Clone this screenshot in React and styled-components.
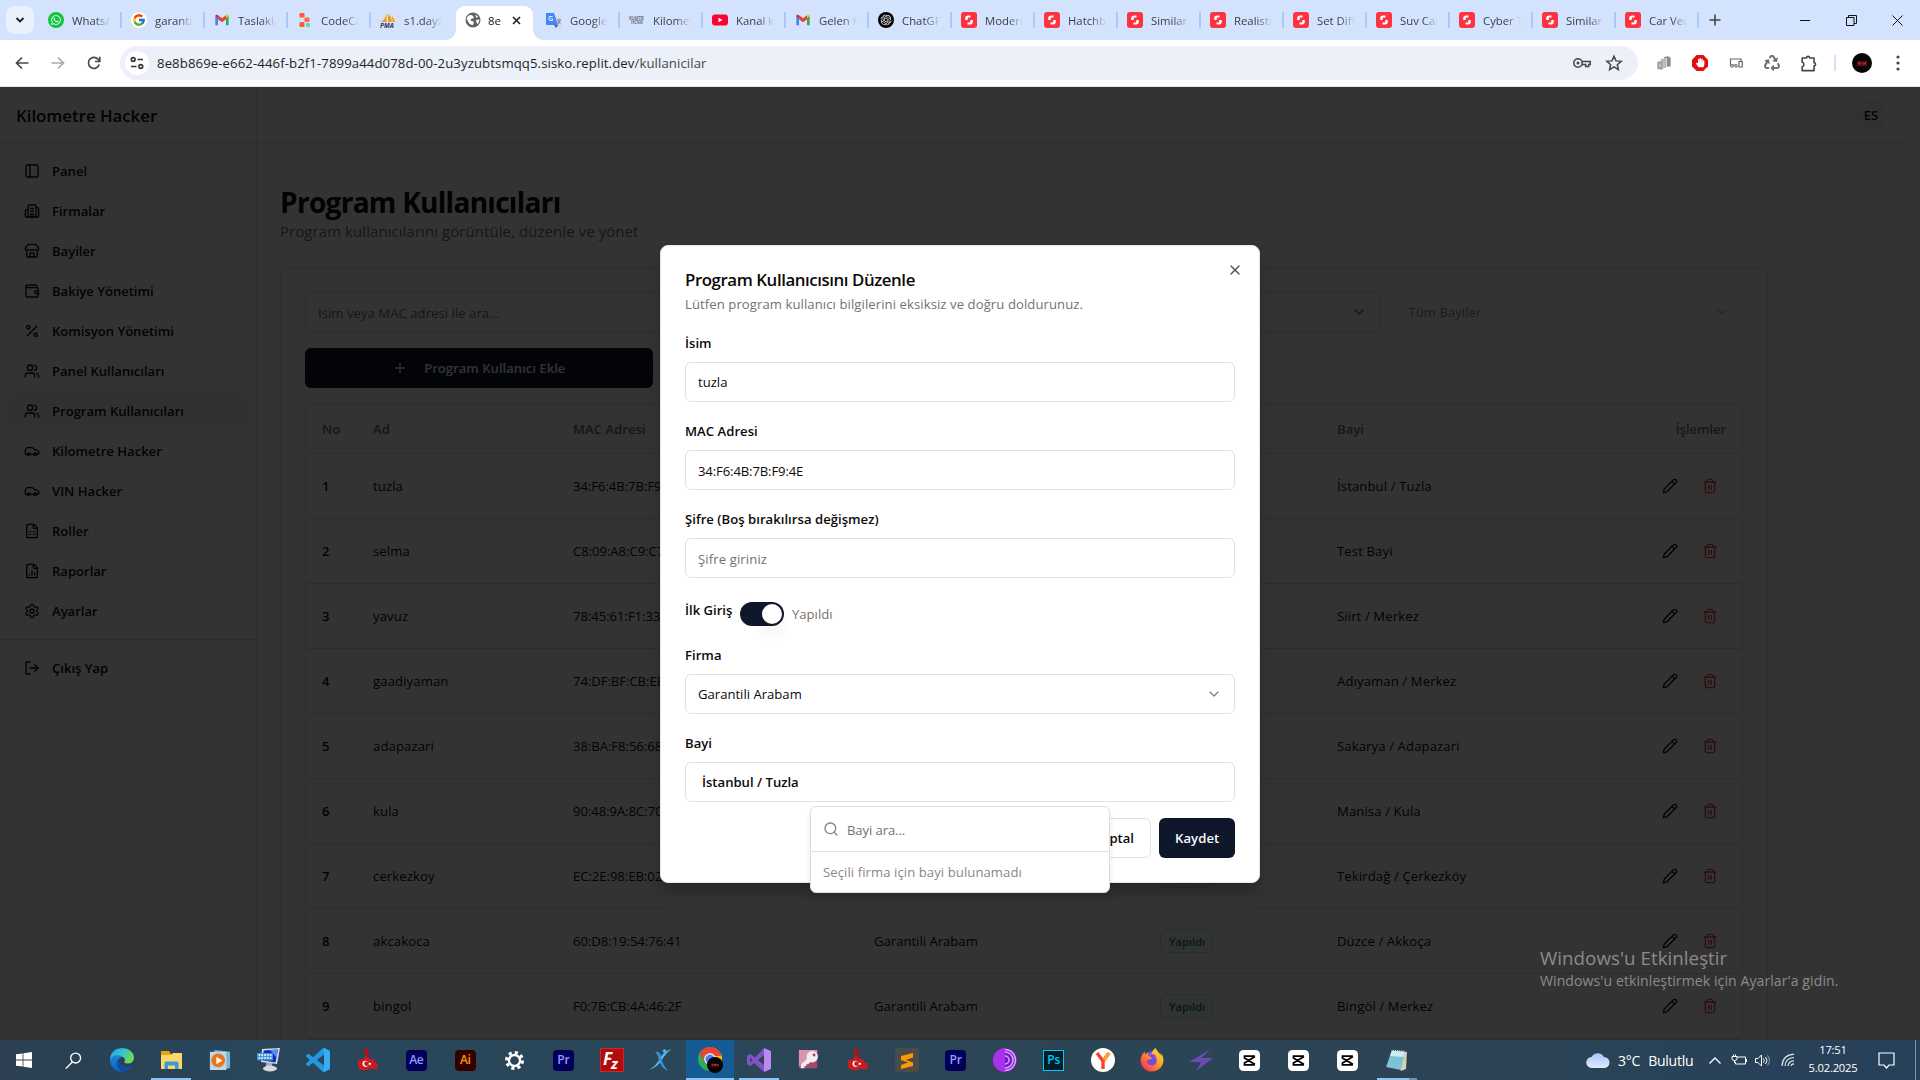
import React from "react";
import styled, { createGlobalStyle, css } from "styled-components";
import {
  PanelLeft, Building2, Store, Wallet, Percent, Users, Car, FileSpreadsheet,
  FileChartColumn, Settings, LogOut, Pencil, Trash2, Plus, ChevronDown, X, Search,
} from "lucide-react";
import { FcGoogle } from "react-icons/fc";
import { FaWhatsapp, FaFirefoxBrowser, FaRecycle, FaHandPaper } from "react-icons/fa";
import { SiOpenai } from "react-icons/si";

const fs = (n) => `font-size: ${(n * 0.936).toFixed(2)}px;`;

const Global = createGlobalStyle`
  *, *::before, *::after { box-sizing: border-box; }
  html, body { margin: 0; padding: 0; height: 100%; overflow: hidden; }
  body { font-family: "Open Sans", "Noto Sans", sans-serif; color: #0c0a09; }
  svg { display: block; flex: none; }
`;

const Screen = styled.div`
  display: grid;
  grid-template-rows: 40px 47px 953px 40px;
  width: 1920px;
  height: 1080px;
  overflow: hidden;
  background: #fff;
`;

/* ---------- browser chrome ---------- */
const TabStrip = styled.div`
  display: flex;
  align-items: stretch;
  background: #d3e3fd;
  padding-left: 6px;
`;
const TabSearch = styled.div`
  width: 28px; height: 28px; margin: 6px 4px 0 0;
  border-radius: 9px; background: #e9f1fe;
  display: flex; align-items: center; justify-content: center;
`;
const Tab = styled.div`
  width: 83px; display: flex; align-items: center; padding-left: 10px; gap: 8px; position: relative;
  ${(p) => p.$line && css`&::after { content: ""; position: absolute; right: -1px; top: 12px; width: 2px; height: 16px; background: #a8c7fa; border-radius: 1px; }`}
  ${(p) => p.$active && css`
    z-index: 1; gap: 7px; padding: 0 0 0 12px;
    &::before { content: ""; position: absolute; z-index: -1; left: 3px; right: 3px; top: 6px; bottom: 0; background: #fff; border-radius: 9px 9px 0 0; }
  `}
`;
const TabFoot = styled.i`
  position: absolute; bottom: 0; width: 10px; height: 10px;
  ${(p) => p.$right
    ? "right: -7px; background: radial-gradient(circle at 100% 0, transparent 9.5px, #fff 10px);"
    : "left: -7px; background: radial-gradient(circle at 0 0, transparent 9.5px, #fff 10px);"}
`;
const TabTitle = styled.span`
  width: ${(p) => p.$w || 38}px; overflow: hidden; white-space: nowrap; ${fs(12.1)} line-height: 20px; color: #3c4043;
  padding-top: 1px;
  mask-image: linear-gradient(90deg, #000 60%, transparent 100%);
  ${(p) => p.$active && "mask-image: none; color: #202124;"}
`;
const TabClose = styled.span`display: flex; margin-left: 1px;`;
const NewTab = styled.div`width: 34px; display: flex; align-items: center; justify-content: center;`;
const WindowButtons = styled.div`margin-left: auto; display: flex;`;
const WindowButton = styled.div`width: 46px; display: flex; align-items: center; justify-content: center;`;

const Toolbar = styled.div`
  display: flex; align-items: center; background: #fff; border-bottom: 1px solid #dfe3e1; padding: 0 4px 0 4px;
`;
const ToolButton = styled.div`
  width: ${(p) => p.$w || 36}px; height: 34px; display: flex; align-items: center; justify-content: center;
`;
const Omnibox = styled.div`
  width: 1518px; height: 34px; border-radius: 17px; background: #ecf0f9; margin-left: 8px; margin-right: 8px;
  display: flex; align-items: center; padding: 0 8px 0 5px;
`;
const SiteInfo = styled.div`
  width: 24px; height: 24px; border-radius: 50%; background: #fff; display: flex; align-items: center; justify-content: center; margin-right: 8px;
`;
const Url = styled.div`${fs(14.1)} letter-spacing: 0.085px; color: #1f1f1f; flex: 1; white-space: nowrap; line-height: 20px; span { color: #474747; }`;
const Rule = styled.i`width: 2px; height: 16px; background: #d3e3fd; margin: 0 7px 0 8px;`;
const ProfileDot = styled.div`
  width: 20px; height: 20px; border-radius: 50%; background: #050505; display: flex; align-items: center; justify-content: center; margin: 0 8px 0 9px;
`;

/* ---------- application ---------- */
const Page = styled.div`
  position: relative; display: grid; grid-template-columns: 257px 1647px; overflow: hidden; background: #fff;
`;
const Sidebar = styled.aside`border-right: 1px solid #e7e5e4;`;
const Brand = styled.div`
  height: 56px; border-bottom: 1px solid #e0dedd; padding: 1px 16px 0; display: flex; align-items: center; ${fs(18)} font-weight: 600; letter-spacing: -0.03px;
`;
const Nav = styled.nav`padding: 8px; ${(p) => p.$last && "border-top: 1px solid #e0dedd;"}`;
const NavItem = styled.div`
  height: 40px; padding: 0 16px; display: flex; align-items: center; gap: 12px; border-radius: 6px; ${fs(14)} font-weight: 600; letter-spacing: -0.02px;
  background: ${(p) => (p.$active ? "#f6f5f4" : "transparent")};
`;
const Main = styled.main`min-width: 0;`;
const TopBar = styled.div`
  height: 56px; border-bottom: 1px solid #e0dedd; display: flex; align-items: center; justify-content: flex-end; padding-right: 17px;
`;
const Avatar = styled.div`
  width: 32px; height: 32px; border-radius: 50%; background: #f5f5f4; display: flex; align-items: center; justify-content: center; ${fs(14)} font-weight: 600;
`;
const Container = styled.div`width: 1536px; padding: 39px 25px 0 23px;`;
const Title = styled.h1`margin: 0; ${fs(30)} line-height: 36px; font-weight: 700; letter-spacing: -0.75px; padding-top: 2px; height: 37px;`;
const Subtitle = styled.p`margin: 0; ${fs(16)} letter-spacing: 0.08px; line-height: 24px; color: #78716c;`;
const Card = styled.section`
  margin-top: 24px; width: 1488px; height: 900px; border: 1px solid #e0dedd; border-radius: 8px; padding: 24px; box-shadow: 0 1px 2px rgba(0,0,0,.05);
`;
const Filters = styled.div`display: grid; grid-template-columns: repeat(4, 347.5px); gap: 16px;`;
const FilterBox = styled.div`
  grid-column: span ${(p) => p.$span || 1}; height: 40px; border: 1px solid #e0dedd; border-radius: 6px; padding: ${(p) => (p.$muted ? 2 : 0)}px 12px 0;
  display: flex; align-items: center; justify-content: space-between; ${fs(14)} letter-spacing: 0.05px;
  color: ${(p) => (p.$muted ? "#78716c" : "#0c0a09")}; opacity: ${(p) => (p.$disabled ? 0.5 : 1)};
  svg { opacity: .6; }
`;
const AddButton = styled.button`
  height: 40px; border: 0; border-radius: 6px; background: #0f172a; color: #f8fafc; font-family: inherit; ${fs(14)} font-weight: 600;
  display: flex; align-items: center; justify-content: center; gap: 16px; padding: 0;
`;
const Table = styled.div`margin-top: 16px; border: 1px solid #e0dedd; border-radius: 6px;`;
const Row = styled.div`
  display: grid; grid-template-columns: 51px 200px 301px 287px 176px 1fr 96px; height: ${(p) => (p.$head ? 49 : 65)}px; align-items: center;
  padding: 0 16px; border-bottom: 1px solid #e0dedd; ${fs(14)} white-space: nowrap;
  ${(p) => p.$head && "font-weight: 600; color: #78716c;"}
`;
const Cell = styled.div`
  ${(p) => p.$strong && "font-weight: 600;"}
  ${(p) => p.$right && "text-align: right; letter-spacing: -0.08px;"}
  ${(p) => p.$mac && "letter-spacing: -0.04px;"}
  ${(p) => p.$name && "letter-spacing: 0.12px;"}
`;
const Actions = styled.div`display: flex; justify-content: flex-end; gap: 24px; padding-right: 8px;`;
const Badge = styled.span`
  display: inline-flex; align-items: center; height: 24px; padding: 0 7px 0 8px; border: 1px solid #b9ebcb; border-radius: 6px; background: #f0fdf4; color: #15803d;
  ${fs(12)} font-weight: 600; letter-spacing: -0.05px; margin-left: -1px; vertical-align: middle;
`;

/* ---------- dialog ---------- */
const Overlay = styled.div`
  position: absolute; inset: 0; background: rgba(0,0,0,.8); display: flex; align-items: center; justify-content: center; padding-top: 1px;
`;
const Dialog = styled.div`
  position: relative; width: 600px; height: 638px; background: #fff; border: 1px solid #e7e5e4; border-radius: 8px; padding: 24px;
  box-shadow: 0 10px 15px -3px rgba(0,0,0,.3);
`;
const DialogClose = styled.span`position: absolute; right: 16px; top: 16px; color: #555352;`;
const DialogTitle = styled.h2`margin: 0; ${fs(18)} line-height: 20px; font-weight: 600; letter-spacing: -0.43px;`;
const DialogText = styled.p`margin: 4px 0 16px; ${fs(14)} letter-spacing: 0.085px; line-height: 20px; color: #78716c;`;
const Field = styled.div`margin-bottom: 16px; position: relative;`;
const Label = styled.label`display: block; height: 24px; line-height: 26px; margin-bottom: 8px; ${fs(14)} font-weight: 600; letter-spacing: 0.03px;`;
const Input = styled.div`
  height: 40px; border: 1px solid #e2e1e0; border-radius: 6px; padding: 0 12px; display: flex; align-items: center; justify-content: space-between; ${fs(14)}
  ${(p) => p.$mac && "letter-spacing: -0.12px; padding-top: 1px;"}
  ${(p) => p.$muted && "color: #78716c; padding-top: 1px; letter-spacing: 0.12px;"}
  ${(p) => p.$strong && "font-weight: 600; padding: 0 16px;"}
`;
const SwitchRow = styled.div`display: flex; height: 32px; align-items: flex-end; margin-bottom: 16px; ${fs(14)} `;
const SwitchLabel = styled.span`font-weight: 600; align-self: flex-start; line-height: 32px; width: 54px; white-space: nowrap;`;
const Switch = styled.div`
  width: 44px; height: 24px; border-radius: 12px; background: #0f172a; padding: 2px; display: flex; justify-content: flex-end; margin: 0 8px 0 1px;
  &::after { content: ""; width: 20px; height: 20px; border-radius: 50%; background: #fff; box-shadow: 0 10px 15px -3px rgba(0,0,0,.12); }
`;
const SwitchState = styled.span`line-height: 24px; color: #78716c;`;
const Footer = styled.div`display: flex; justify-content: flex-end; gap: 8px;`;
const Button = styled.button`
  height: 40px; padding: 0 16px; border-radius: 6px; font-family: inherit; ${fs(14)} font-weight: 600;
  ${(p) => p.$primary ? "background: #0f172a; color: #f8fafc; border: 0; width: 76px; letter-spacing: 0.08px;" : "background: #fff; color: #0c0a09; border: 1px solid #e2e1e0;"}
`;
const Popover = styled.div`
  position: absolute; z-index: 2; top: 76px; left: 125px; width: 300px; height: 87px; background: #fff; border: 1px solid #dededd; border-radius: 6px;
  box-shadow: 0 4px 6px -1px rgba(0,0,0,.12); ${fs(14)} color: #78716c;
`;
const PopSearch = styled.div`
  height: 45px; border-bottom: 1px solid #e2e1e0; padding: 2px 12px 0; display: flex; align-items: center; gap: 8px; letter-spacing: -0.1px;
  svg { margin-top: -2px; }
`;
const PopEmpty = styled.div`height: 40px; line-height: 41px; padding: 0 12px; color: #8b8785; letter-spacing: 0.08px;`;
const Watermark = styled.div`
  position: absolute; right: 81px; bottom: 49px; width: 299px; color: #8b8b8b; white-space: nowrap;
  p { margin: 0; ${fs(20)} line-height: 26px; letter-spacing: 0.05px; }
  span { display: block; ${fs(15)} line-height: 20px; letter-spacing: 0.09px; }
`;

/* ---------- taskbar ---------- */
const Taskbar = styled.div`
  display: flex; background: linear-gradient(90deg, #2b3f50 0%, #28455a 12%, #2a4658 35%, #2c4555 55%, #2b4355 80%, #27405a 100%); color: #fff;
`;
const TaskSlot = styled.div`
  width: 48px; margin-right: 1.04px; height: 40px; display: flex; align-items: center; justify-content: center; position: relative;
  background: ${(p) => (p.$active ? "#165c94" : "transparent")};
  ${(p) => p.$open && css`&::after { content: ""; position: absolute; bottom: 0; height: 2px; left: ${p.$active ? 0 : 4}px; right: ${p.$active ? 0 : 4}px; background: ${p.$stack ? "linear-gradient(90deg,#8fc4f0 80%,#6d93b0 80%)" : "#8fc4f0"}; }`}
`;
const AdobeTile = styled.span`
  width: 21px; height: 21px; border-radius: ${(p) => (p.$square ? 0 : 4)}px; background: ${(p) => p.$bg}; color: ${(p) => p.$fg};
  border: ${(p) => (p.$square ? `1px solid ${p.$fg}` : "0")}; display: flex; align-items: center; justify-content: center; font-size: 12px; font-weight: 600; line-height: 1;
  padding-bottom: 1px; letter-spacing: -0.3px;
`;
const Tray = styled.div`margin-left: auto; display: flex; align-items: center; ${fs(15)} letter-spacing: -0.25px;`;
const Weather = styled.div`display: flex; align-items: center; gap: 8px; width: 117px; white-space: nowrap;`;
const TrayIcon = styled.div`width: ${(p) => p.$w}px; display: flex; justify-content: center;`;
const Clock = styled.div`width: 64px; text-align: center; ${fs(12)} line-height: 18px; padding-bottom: 2px; letter-spacing: -0.2px;`;
const ShowDesktop = styled.i`width: 5px; height: 40px; border-left: 1px solid #8796a2;`;

/* ---------- icons ---------- */
const S = ({ s = 16, w, h, vb = "0 0 24 24", children, ...r }) => (
  <svg width={w || s} height={h || s} viewBox={vb} fill="none" {...r}>{children}</svg>
);
const WhatsApp = () => (
  <S vb="0 0 16 16"><circle cx="8" cy="8" r="8" fill="#12c53c" /><FaWhatsapp x="2.5" y="2.5" size={11} color="#fff" /></S>
);
const Google = () => (
  <S vb="0 0 16 16"><circle cx="8" cy="8" r="8" fill="#fff" /><FcGoogle x="1" y="1" size={14} /></S>
);
const Gmail = () => (
  <S><path d="M2 20V6l4 3v11z" fill="#4285f4" /><path d="M18 20V9l4-3v14z" fill="#34a853" /><path d="M18 9V5.500l1.500-1.200Q22 3.300 22 6.500z" fill="#fbbc04" /><path d="M6 9V5L12 9.500 18 5v6l-6 4.500L6 11z" fill="#ea4335" /><path d="M6 9V5.500L4.500 4.300Q2 3.300 2 6.500z" fill="#c5221f" /></S>
);
const Blocks = () => (
  <S vb="0 0 16 16"><rect x="2.500" y="1" width="5" height="4.500" rx="1" fill="#ff5c35" /><rect x="7.500" y="5.500" width="5" height="4.500" rx="1" fill="#ff6f3c" /><rect x="2.500" y="10" width="5" height="5" rx="1" fill="#ff5c35" /><rect x="9" y="11" width="4" height="4" rx="1" fill="#65dba0" /></S>
);
const Pma = () => (
  <S vb="0 0 16 16"><path d="M6.500 0v10H1Q6 7 6.500 0zM8 2Q12.500 5 11.500 10H8zM12 4q3 3 3 6h-2.500z" fill="#f89c0e" /><text x="0" y="15.800" fontSize="6.500" fontWeight="700" fontStyle="italic" fill="#34345a" fontFamily="Open Sans, sans-serif">PMA</text></S>
);
const Translate = () => (
  <S vb="0 0 16 16"><path d="M7 5h8.500v11H9z" fill="#d7d9dc" /><path d="M0 1h8l4 12H1q-1 0-1-1z" fill="#4285f4" /><path d="M8 13h4l-2 3z" fill="#3367d6" /><text x="2" y="9" fontSize="7" fontWeight="600" fill="#fff" fontFamily="Open Sans, sans-serif">G</text><path d="M11 8h4M13 7v1M11.500 12l3-4M12 9l2.500 3" stroke="#5d7291" strokeWidth="0.8" /></S>
);
const KmIcon = () => (
  <S vb="0 0 16 16"><text x="0" y="7.500" fontSize="4.500" fontWeight="700" fill="#6b7280" fontFamily="Open Sans, sans-serif" textLength="15">KLMTR</text><text x="2" y="12" fontSize="4.500" fontWeight="700" fill="#6b7280" fontFamily="Open Sans, sans-serif" textLength="12">HCKR</text></S>
);
const YouTube = () => (
  <S vb="0 0 16 16"><rect x="0" y="2.500" width="16" height="11" rx="3" fill="#ff0033" /><path d="M6.500 5.700v4.600l4-2.300z" fill="#fff" /></S>
);
const ChatGpt = () => (
  <S vb="0 0 16 16"><circle cx="8" cy="8" r="8" fill="#000" /><SiOpenai x="2.5" y="2.5" size={11} color="#fff" /></S>
);
const Stock = () => (
  <S vb="0 0 16 16"><rect width="16" height="16" rx="3" fill="#ff333f" /><path d="M9.500 3.500H7.400Q4.200 3.500 4.200 6.300v1.700h2.500V6.400q0-.9.900-.9h1.900zM6.500 12.500h2.100q3.200 0 3.200-2.800V8H9.300v1.600q0 .9-.9.900H6.500z" fill="#fff" /></S>
);
const Globe = () => (
  <S vb="0 0 16 16"><circle cx="8" cy="8" r="7.500" fill="#5f6368" /><path d="M3 4q3-2 5 0l1 2-3 1q-1 2 1 2l2 1-1 3Q4 13 3 9L1.500 7zM10 2.500l3 2-1.500 1.500zM11 8l3.500-.5-1 3.500-1.500 1z" fill="#fff" /></S>
);
const Thumb = () => (
  <S w={23} h={24}><path d="M2 12q5 0 8-4L8 3q0-3 2.500-3 2 0 2.500 3l1 5-1 3h5q1.500 1 .5 2.500L23 16l-1 6-7-1Q9 24 4 22q-3-4-2-10z" fill="#c91c22" /><path d="M8 3q0-3 2.500-3 2 0 2.500 3l1 5-2 2z" fill="#a5151a" /><circle cx="10" cy="16" r="3.200" fill="#fff" /><circle cx="11" cy="15.800" r="2.500" fill="#c91c22" /><circle cx="14.500" cy="16" r="1.200" fill="#fff" /></S>
);
const CapCut = () => (
  <S w={21} h={21} vb="0 0 21 21"><rect width="21" height="21" rx="4.500" fill="#fff" /><path d="M15 8V6.200H5.500V8L16 14.500M15 13v1.800H5.500V13L16 6.500" stroke="#000" strokeWidth="1.800" /></S>
);

const WinLogo = () => <S w={16} h={16} vb="0 0 16 16"><path d="M0 2.300l6.600-.9v6.200H0zM7.400 1.300L16 0v7.600H7.400zM0 8.400h6.600v6.200L0 13.700zM7.400 8.400H16V16l-8.600-1.300z" fill="#fff" /></S>;
const TaskSearch = () => <S s={17}><circle cx="15" cy="8.500" r="7" stroke="#fff" strokeWidth="1.900" /><path d="M10.300 14L1 23.500" stroke="#fff" strokeWidth="1.900" /></S>;
const Edge = () => (
  <S s={24}>
    <defs><linearGradient id="eg" x1="0" y1="0" x2="1" y2=".5"><stop stopColor="#1f9ee8" /><stop offset=".5" stopColor="#35c1d8" /><stop offset="1" stopColor="#6bdc54" /></linearGradient><linearGradient id="eb" x1="0" y1="0" x2="0" y2="1"><stop stopColor="#1789dc" /><stop offset="1" stopColor="#1260b8" /></linearGradient></defs>
    <path d="M0 11.500A12 12 0 0 0 12 24q-6-5-4-11 1-4 5-4Q6 4.500 0 11.500z" fill="url(#eb)" />
    <path d="M9 10q-5 6 1 12 5 4 11-2.500 1-1.500 0-2-4 2-8 .5-5-2-4-8z" fill="#0f4fa3" />
    <path d="M0 11.500Q.5 1 12 0q11 .5 12 9.500 0 6-6.500 6-4.500-.3-3-2Q16 11 13 9 6 4.500 0 11.500z" fill="url(#eg)" />
  </S>
);
const Explorer = () => <S w={23} h={20} vb="0 0 23 20"><path d="M1 1h8l2 3h11v15H1z" fill="#e5a50f" /><path d="M1 5h10l2-2h9v16H1z" fill="#fcd667" /><path d="M4.500 19v-6q0-1.500 1.500-1.500h11q1.500 0 1.500 1.500v6H15v-3.500H8V19z" fill="#3d98db" /></S>;
const Media = () => <S s={22}><path d="M6 1l17 2v18L6 23z" fill="#79b4d8" /><rect x="1" y="3" width="18" height="20" rx="1" fill="#b8d9ea" /><circle cx="10" cy="12.500" r="7.500" fill="#ee7417" /><path d="M8 8.500v8l6.500-4z" fill="#fff" /></S>;
const Remote = () => <S s={24}><path d="M5 1l18-1-3 16-16-2z" fill="#d8dde6" /><path d="M6.500 2.500l14.500-1-2.500 13L6 12.500z" fill="#1229c0" /><path d="M13 2l8-.5-1.500 8z" fill="#6388ed" /><rect x="0" y="5" width="16" height="7.500" rx="1" fill="#3f95d4" /><path d="M1.500 7h13M1.500 10h13" stroke="#fff" strokeWidth="1.400" strokeDasharray="1.800 1" /><path d="M9 15h6v4H9z" fill="#a9adb3" /><ellipse cx="13" cy="20.500" rx="7" ry="3" fill="#d7dadd" /></S>;
const VsCode = () => <S s={24}><path d="M23.150 2.587L18.210.21a1.494 1.494 0 0 0-1.705.29l-9.460 8.630-4.120-3.128a1 1 0 0 0-1.276.057L.327 7.261A1 1 0 0 0 .326 8.740L3.899 12 .326 15.260a1 1 0 0 0 .001 1.479L1.650 17.940a1 1 0 0 0 1.276.057l4.120-3.128 9.460 8.630a1.492 1.492 0 0 0 1.704.29l4.942-2.377A1.500 1.500 0 0 0 24 20.060V3.939a1.500 1.500 0 0 0-.85-1.352zm-5.146 14.861L10.826 12l7.178-5.448v10.896z" fill="#2199df" /><path d="M18 0l5 2.500q1 .5 1 1.500v16q0 1-1 1.500L18 24z" fill="#37aef2" /></S>;
const GearSolid = () => <S s={19}><g stroke="#fff"><circle cx="12" cy="12" r="7" strokeWidth="3" /><circle cx="12" cy="12" r="10" strokeWidth="4" strokeDasharray="4 3.850" /></g></S>;
const FileZilla = () => <S s={24}><rect width="24" height="24" fill="#b30b0b" /><rect x=".5" y=".5" width="23" height="23" stroke="#d84a4a" strokeDasharray="1 1" /><text x="3" y="17" fontSize="17" fontWeight="700" fontStyle="italic" fill="#fff" fontFamily="Open Sans, sans-serif">F</text><text x="11" y="21" fontSize="15" fontWeight="700" fontStyle="italic" fill="#fff" fontFamily="Open Sans, sans-serif">z</text></S>;
const Figure = () => <S s={24}><path d="M22.500 1Q16 6 13 12 9 19 0 22q8-5 11-12 4-7 11.500-9z" fill="#57b4ee" /><path d="M6 4q5-1 6 4 1 8 7 15-7-3-9-11Q9 6 6 4z" fill="#3c8ed6" /><circle cx="15.500" cy="3" r="1.800" fill="#57b4ee" /></S>;
const Chrome = () => (
  <S w={26} h={26} vb="-1 0 26 26"><circle cx="12" cy="12" r="12" fill="#34a853" /><path d="M1.600 6A12 12 0 0 1 22.400 6L23 9H12z" fill="#ea4335" /><path d="M22.400 6A12 12 0 0 1 12 24l5-9-2-6h8z" fill="#fbbc04" /><path d="M1.600 6L12 9l-5 6z" fill="#ea4335" /><circle cx="12" cy="12" r="5.800" fill="#fff" /><circle cx="12" cy="12" r="4.600" fill="#4285f4" /><circle cx="17" cy="18" r="8" fill="#050505" /><path d="M13.500 18h7" stroke="#c02229" strokeWidth="2.500" strokeDasharray="2 .5" /></S>
);
const VisualStudio = () => <S s={24}><path d="M17 0l7 3v18l-7 3z" fill="#b98bf0" /><path d="M17 0v7L3.500 18 0 16.500v-9L3.500 6 17 17v7L5 13z" fill="#8252c4" /><path d="M3 9.500v5L5.500 12z" fill="#2c4555" /><path d="M17 8l-5 4 5 4z" fill="#2c4555" /></S>;
const Access = () => <S s={22}><rect x="1" y="1" width="20" height="20" rx="2" fill="#a8476c" /><path d="M1 1h20v8Q9 9 1 19z" fill="#d995ad" /><circle cx="15.500" cy="8.500" r="6.200" fill="#f1eef0" /><circle cx="17.500" cy="6.500" r="1.600" fill="#a8476c" /><path d="M10.500 10l3.500 3.500-3 3H9v2H7v2.500H3v-4z" fill="#f1eef0" /></S>;
const Sublime = () => <S s={24}><rect width="24" height="24" rx="2" fill="#4b4b4b" /><path d="M18 5v4.500L11 12l7 2.500V18L6 21v-4l7-2.500L6 12V8z" fill="#ff9800" /></S>;
const Tor = () => <S s={24}><circle cx="12" cy="12" r="12" fill="#7d1ac8" /><path d="M12 0a12 12 0 0 0 0 24z" fill="#a832ec" /><path d="M12 4a8 8 0 0 1 0 16M12 8a4 4 0 0 1 0 8M12 1.500a10.500 10.500 0 0 1 0 21" stroke="#d9a7fa" strokeWidth="1.500" /></S>;
const Yandex = () => <S s={24}><circle cx="12" cy="12" r="12" fill="#fff" /><path d="M6 5l6 8M18 5l-6 8v8" stroke="#f7432b" strokeWidth="3.400" /><path d="M18 5l-5 7" stroke="#ffa02b" strokeWidth="3.400" /></S>;
const Firefox = () => <S s={24}><defs><linearGradient id="ff" x1="1" y1="0" x2="0" y2="1"><stop stopColor="#fff044" /><stop offset=".45" stopColor="#ff9a1f" /><stop offset="1" stopColor="#f5156c" /></linearGradient></defs><circle cx="12" cy="13" r="10" fill="#7a48dc" /><FaFirefoxBrowser size={24} fill="url(#ff)" /></S>;
const Bolt = () => <S s={24}><path d="M22 1L0 14h12L7 23 24 10H12z" fill="#6a4bb0" /></S>;
const Notepad = () => <S s={24}><path d="M7 2l15 2-1 17-5 2z" fill="#d8cfb9" /><path d="M7 2l13 1-4 19L1 19z" fill="#7cc3d6" /><path d="M7 2l13 1-1.500 6L5 8z" fill="#c8ecf2" /><path d="M7 2l13 1" stroke="#51606a" strokeWidth="1.500" strokeDasharray="1 1" /></S>;

const adobe = (text, bg, fg, square) => <AdobeTile $bg={bg} $fg={fg} $square={square}>{text}</AdobeTile>;
const tasks = [
  { i: <WinLogo /> }, { i: <TaskSearch /> }, { i: <Edge /> }, { i: <Explorer />, open: true }, { i: <Media /> }, { i: <Remote /> }, { i: <VsCode /> }, { i: <Thumb /> },
  { i: adobe("Ae", "#00005b", "#9999ff") }, { i: adobe("Ai", "#330000", "#ff9a00") }, { i: <GearSolid /> }, { i: adobe("Pr", "#00005b", "#9999ff") }, { i: <FileZilla /> },
  { i: <Figure /> }, { i: <Chrome />, open: true, active: true }, { i: <VisualStudio />, open: true }, { i: <Access /> }, { i: <Thumb /> }, { i: <Sublime /> },
  { i: adobe("Pr", "#00005b", "#9999ff") }, { i: <Tor /> }, { i: adobe("Ps", "#001d26", "#00c8ff", true) }, { i: <Yandex /> }, { i: <Firefox /> }, { i: <Bolt /> },
  { i: <CapCut /> }, { i: <CapCut /> }, { i: <CapCut /> }, { i: <Notepad />, open: true, stack: true },
];

const tabs = [
  [<WhatsApp />, "WhatsApp"], [<Google />, "garantili"], [<Gmail />, "Taslaklar"], [<Blocks />, "CodeCa"], [<Pma />, "s1.dayz"],
  [<Globe />, "8e"], [<Translate />, "Google"], [<KmIcon />, "Kilomet"], [<YouTube />, "Kanal k"], [<Gmail />, "Gelen K"], [<ChatGpt />, "ChatGPT"],
  [<Stock />, "Modern"], [<Stock />, "Hatchba"], [<Stock />, "Similar"], [<Stock />, "Realistic"], [<Stock />, "Set Diffe"], [<Stock />, "Suv Car"],
  [<Stock />, "Cyber T"], [<Stock />, "Similar"], [<Stock />, "Car Vect"],
];

const nav = [
  [PanelLeft, "Panel"], [Building2, "Firmalar"], [Store, "Bayiler"], [Wallet, "Bakiye Yönetimi"], [Percent, "Komisyon Yönetimi"], [Users, "Panel Kullanıcıları"],
  [Users, "Program Kullanıcıları"], [Car, "Kilometre Hacker"], [Car, "VIN Hacker"], [FileSpreadsheet, "Roller"], [FileChartColumn, "Raporlar"], [Settings, "Ayarlar"],
];

const users = [
  ["tuzla", "34:F6:4B:7B:F9:4E", "İstanbul / Tuzla"], ["selma", "C8:09:A8:C9:C7", "Test Bayi"], ["yavuz", "78:45:61:F1:33", "Siirt / Merkez"],
  ["gaadiyaman", "74:DF:BF:CB:EE", "Adıyaman / Merkez"], ["adapazari", "38:BA:F8:56:68", "Sakarya / Adapazari"], ["kula", "90:48:9A:8C:70", "Manisa / Kula"],
  ["cerkezkoy", "EC:2E:98:EB:02", "Tekirdağ / Çerkezköy"], ["akcakoca", "60:D8:19:54:76:41", "Düzce / Akkoça"], ["bingol", "F0:7B:CB:4A:46:2F", "Bingöl / Merkez"],
];

function Browser() {
  return (
    <>
      <TabStrip>
        <TabSearch><S s={10} vb="0 0 10 10"><path d="M1.500 3L5 6.500 8.500 3" stroke="#1f1f1f" strokeWidth="1.800" /></S></TabSearch>
        {tabs.map(([icon, title], i) =>
          i === 5 ? (
            <Tab key={i} $active>
              <TabFoot /><TabFoot $right />
              {icon}
              <TabTitle $w={16} $active>{title}</TabTitle>
              <TabClose><S s={9} vb="0 0 9 9"><path d="M1 1l7 7M8 1L1 8" stroke="#1f1f1f" strokeWidth="1.600" /></S></TabClose>
            </Tab>
          ) : (
            <Tab key={i} $line={i !== 4}>{icon}<TabTitle>{title}</TabTitle></Tab>
          )
        )}
        <NewTab><S s={12} vb="0 0 12 12"><path d="M6 .5v11M.5 6h11" stroke="#444746" strokeWidth="1.600" /></S></NewTab>
        <WindowButtons>
          <WindowButton><S s={10} vb="0 0 10 10"><path d="M0 5.500h10" stroke="#111" strokeWidth="1" /></S></WindowButton>
          <WindowButton><S s={11} vb="0 0 11 11"><path d="M.5 2.500h7.500v8H.5zM2.500 2.500v-2h8v8H8" stroke="#111" strokeWidth="1" /></S></WindowButton>
          <WindowButton><S s={11} vb="0 0 11 11"><path d="M.5.5l10 10M10.500.5l-10 10" stroke="#111" strokeWidth="1" /></S></WindowButton>
        </WindowButtons>
      </TabStrip>
      <Toolbar>
        <ToolButton><S s={14} vb="0 0 14 14"><path d="M13.500 7H1.500M7 1.500L1.500 7 7 12.500" stroke="#444746" strokeWidth="1.700" /></S></ToolButton>
        <ToolButton><S s={14} vb="0 0 14 14"><path d="M.5 7h12M7 1.500L12.500 7 7 12.500" stroke="#a9abad" strokeWidth="1.700" /></S></ToolButton>
        <ToolButton><S s={14} vb="0 0 14 14"><path d="M12.200 8.500A5.500 5.500 0 1 1 11 3.200L12.500 5M12.800.8v4.700H8" stroke="#444746" strokeWidth="1.700" /></S></ToolButton>
        <Omnibox>
          <SiteInfo><S s={14} vb="0 0 14 14"><g stroke="#333" strokeWidth="1.600"><circle cx="3.200" cy="3.500" r="1.900" /><path d="M7.500 3.500H13M1 10.500h5.500" /><circle cx="10.800" cy="10.500" r="1.900" /></g></S></SiteInfo>
          <Url>8e8b869e-e662-446f-b2f1-7899a44d078d-00-2u3yzubtsmqq5.sisko.replit.dev<span>/kullanicilar</span></Url>
          <ToolButton $w={32}><S w={18} h={10} vb="0 0 18 10"><circle cx="5" cy="5" r="4.200" stroke="#444746" strokeWidth="1.500" /><circle cx="5" cy="5" r="1.500" fill="#444746" /><path d="M9 3.500h8.200v3h-1.500v2h-3v-2H9" stroke="#444746" strokeWidth="1.500" /></S></ToolButton>
          <ToolButton $w={32}><S s={18}><path d="M12 3l2.700 6.200 6.800.6-5.100 4.400 1.500 6.600L12 17.300l-5.900 3.500 1.500-6.600-5.100-4.400 6.800-.6z" stroke="#444746" strokeWidth="2" /></S></ToolButton>
        </Omnibox>
        <ToolButton><S s={16}><path d="M2 10l8-1v13l-8-1z" fill="#9a9a9a" /><path d="M7 6l8-1v14l-5 1V9H7z" fill="#b9b9b9" /><path d="M12 3l7-1 3 3v12l-6 1V5h-4z" fill="#8c8c8c" /><path d="M6 12.500v6" stroke="#e6e6e6" strokeWidth="1.500" /></S></ToolButton>
        <ToolButton><S vb="0 0 16 16"><path d="M4.700 0h6.600L16 4.700v6.600L11.300 16H4.700L0 11.300V4.700z" fill="#e40d0d" /><FaHandPaper x="3.5" y="3" size={9.5} color="#fff" /></S></ToolButton>
        <ToolButton><S w={14} h={10} vb="0 0 14 10"><path d="M8 7H1.500V1H12v2" stroke="#666" strokeWidth="1.200" /><circle cx="3" cy="8" r="1.300" stroke="#666" fill="#fff" /><circle cx="7" cy="8" r="1.300" stroke="#666" fill="#fff" /><path d="M10 3.500h3.300v5.500H10z" stroke="#666" strokeWidth="1.200" fill="#fff" /></S></ToolButton>
        <ToolButton><FaRecycle size={16} color="#6d7073" /></ToolButton>
        <ToolButton><S s={19}><path d="M4 5h5.500a2 2 0 1 1 4 0H19v6a2 2 0 1 1 0 4v6H4v-5a2.800 2.800 0 0 0 0-5.500z" stroke="#444746" strokeWidth="2" strokeLinejoin="round" /></S></ToolButton>
        <Rule />
        <ProfileDot><S w={10} h={5} vb="0 0 10 5"><path d="M0 0h10v5H0z" fill="#5d0f12" /><path d="M1 2.500h3M6 2.500h3" stroke="#b8282d" strokeWidth="1.600" /></S></ProfileDot>
        <ToolButton><S w={4} h={16} vb="0 0 4 16"><g fill="#444746"><circle cx="2" cy="2" r="1.600" /><circle cx="2" cy="8" r="1.600" /><circle cx="2" cy="14" r="1.600" /></g></S></ToolButton>
      </Toolbar>
    </>
  );
}

function EditDialog() {
  return (
    <Dialog>
      <DialogClose><X size={16} strokeWidth={2} /></DialogClose>
      <DialogTitle>Program Kullanıcısını Düzenle</DialogTitle>
      <DialogText>Lütfen program kullanıcı bilgilerini eksiksiz ve doğru doldurunuz.</DialogText>
      <Field><Label>İsim</Label><Input>tuzla</Input></Field>
      <Field><Label>MAC Adresi</Label><Input $mac>34:F6:4B:7B:F9:4E</Input></Field>
      <Field><Label>Şifre (Boş bırakılırsa değişmez)</Label><Input $muted>Şifre giriniz</Input></Field>
      <SwitchRow><SwitchLabel>İlk Giriş</SwitchLabel><Switch /><SwitchState>Yapıldı</SwitchState></SwitchRow>
      <Field><Label>Firma</Label><Input>Garantili Arabam<ChevronDown size={16} color="#858382" /></Input></Field>
      <Field>
        <Label>Bayi</Label>
        <Input $strong>İstanbul / Tuzla</Input>
        <Popover>
          <PopSearch><Search size={16} color="#858382" />Bayi ara...</PopSearch>
          <PopEmpty>Seçili firma için bayi bulunamadı</PopEmpty>
        </Popover>
      </Field>
      <Footer><Button>İptal</Button><Button $primary>Kaydet</Button></Footer>
    </Dialog>
  );
}

export default function App() {
  return (
    <Screen>
      <Global />
      <Browser />
      <Page>
        <Sidebar>
          <Brand>Kilometre Hacker</Brand>
          <Nav>
            {nav.map(([Icon, text], i) => <NavItem key={i} $active={i === 6}><Icon size={16} />{text}</NavItem>)}
          </Nav>
          <Nav $last><NavItem><LogOut size={16} />Çıkış Yap</NavItem></Nav>
        </Sidebar>
        <Main>
          <TopBar><Avatar>ES</Avatar></TopBar>
          <Container>
            <Title>Program Kullanıcıları</Title>
            <Subtitle>Program kullanıcılarını görüntüle, düzenle ve yönet</Subtitle>
            <Card>
              <Filters>
                <FilterBox $span={2} $muted>İsim veya MAC adresi ile ara...</FilterBox>
                <FilterBox>Tüm Firmalar<ChevronDown size={16} /></FilterBox>
                <FilterBox $disabled>Tüm Bayiler<ChevronDown size={16} /></FilterBox>
                <AddButton><Plus size={16} />Program Kullanıcı Ekle</AddButton>
              </Filters>
              <Table>
                <Row $head>
                  <Cell>No</Cell><Cell>Ad</Cell><Cell>MAC Adresi</Cell><Cell>Firma</Cell><Cell>İlk Giriş</Cell><Cell>Bayi</Cell><Cell $right>İşlemler</Cell>
                </Row>
                {users.map(([name, mac, dealer], i) => (
                  <Row key={i}>
                    <Cell $strong>{i + 1}</Cell><Cell $name>{name}</Cell><Cell $mac>{mac}</Cell><Cell>Garantili Arabam</Cell>
                    <Cell><Badge>Yapıldı</Badge></Cell><Cell $name>{dealer}</Cell>
                    <Actions><Pencil size={16} /><Trash2 size={16} color="#ef4444" /></Actions>
                  </Row>
                ))}
              </Table>
            </Card>
          </Container>
        </Main>
        <Overlay><EditDialog /></Overlay>
        <Watermark><p>Windows'u Etkinleştir</p><span>Windows'u etkinleştirmek için Ayarlar'a gidin.</span></Watermark>
      </Page>
      <Taskbar>
        {tasks.map((t, i) => <TaskSlot key={i} $open={t.open} $active={t.active} $stack={t.stack}>{t.i}</TaskSlot>)}
        <Tray>
          <Weather>
            <S w={24} h={16} vb="0 0 24 16"><defs><linearGradient id="cl" x1="0" y1="0" x2="0" y2="1"><stop stopColor="#a9c3f7" /><stop offset="1" stopColor="#dfe9fc" /></linearGradient></defs><path d="M6 16a5.500 5.500 0 0 1-.5-11A7 7 0 0 1 18 5a5.500 5.500 0 0 1 0 11z" fill="url(#cl)" /></S>
            <span>3°C</span><span>Bulutlu</span>
          </Weather>
          <TrayIcon $w={24}><S w={12} h={7} vb="0 0 12 7"><path d="M.5 6.500L6 1l5.500 5.500" stroke="#fff" strokeWidth="1.300" /></S></TrayIcon>
          <TrayIcon $w={24}><S w={16} h={12} vb="0 0 16 12"><path d="M6 3h8.500v7H4.500V8M15.500 5v3M1 2.500h5V5q0 1.500-2.500 1.500T1 5zM2.500.5v2M4.500.5v2M3.500 6.500V9" stroke="#fff" /></S></TrayIcon>
          <TrayIcon $w={24}><S w={16} h={13} vb="0 0 16 13"><path d="M.5 4.500H3L6.500 1v11L3 8.500H.5zM8.500 4.500q1.500 2 0 4M10.500 3q3 3.500 0 7" stroke="#fff" /><path d="M12.500 1.500q4 5 0 10" stroke="#8ea0ac" /></S></TrayIcon>
          <TrayIcon $w={26}><S w={14} h={14} vb="0 0 14 14"><g stroke="#dfe6ea" strokeWidth="1.200"><path d="M1 13Q1.500 2 13 1.200M4 13q.5-8 9-8.500M7 13q.5-5 6-5.200M10 13q.2-2 3-2.200" /></g></S></TrayIcon>
          <Clock>17:51<br />5.02.2025</Clock>
          <TrayIcon $w={42}><S w={17} h={17} vb="0 0 17 17"><path d="M1 1h15v12h-5l-2.500 3L6 13H1z" stroke="#fff" strokeWidth="1.200" /></S></TrayIcon>
          <TrayIcon $w={8} />
          <ShowDesktop />
        </Tray>
      </Taskbar>
    </Screen>
  );
}
